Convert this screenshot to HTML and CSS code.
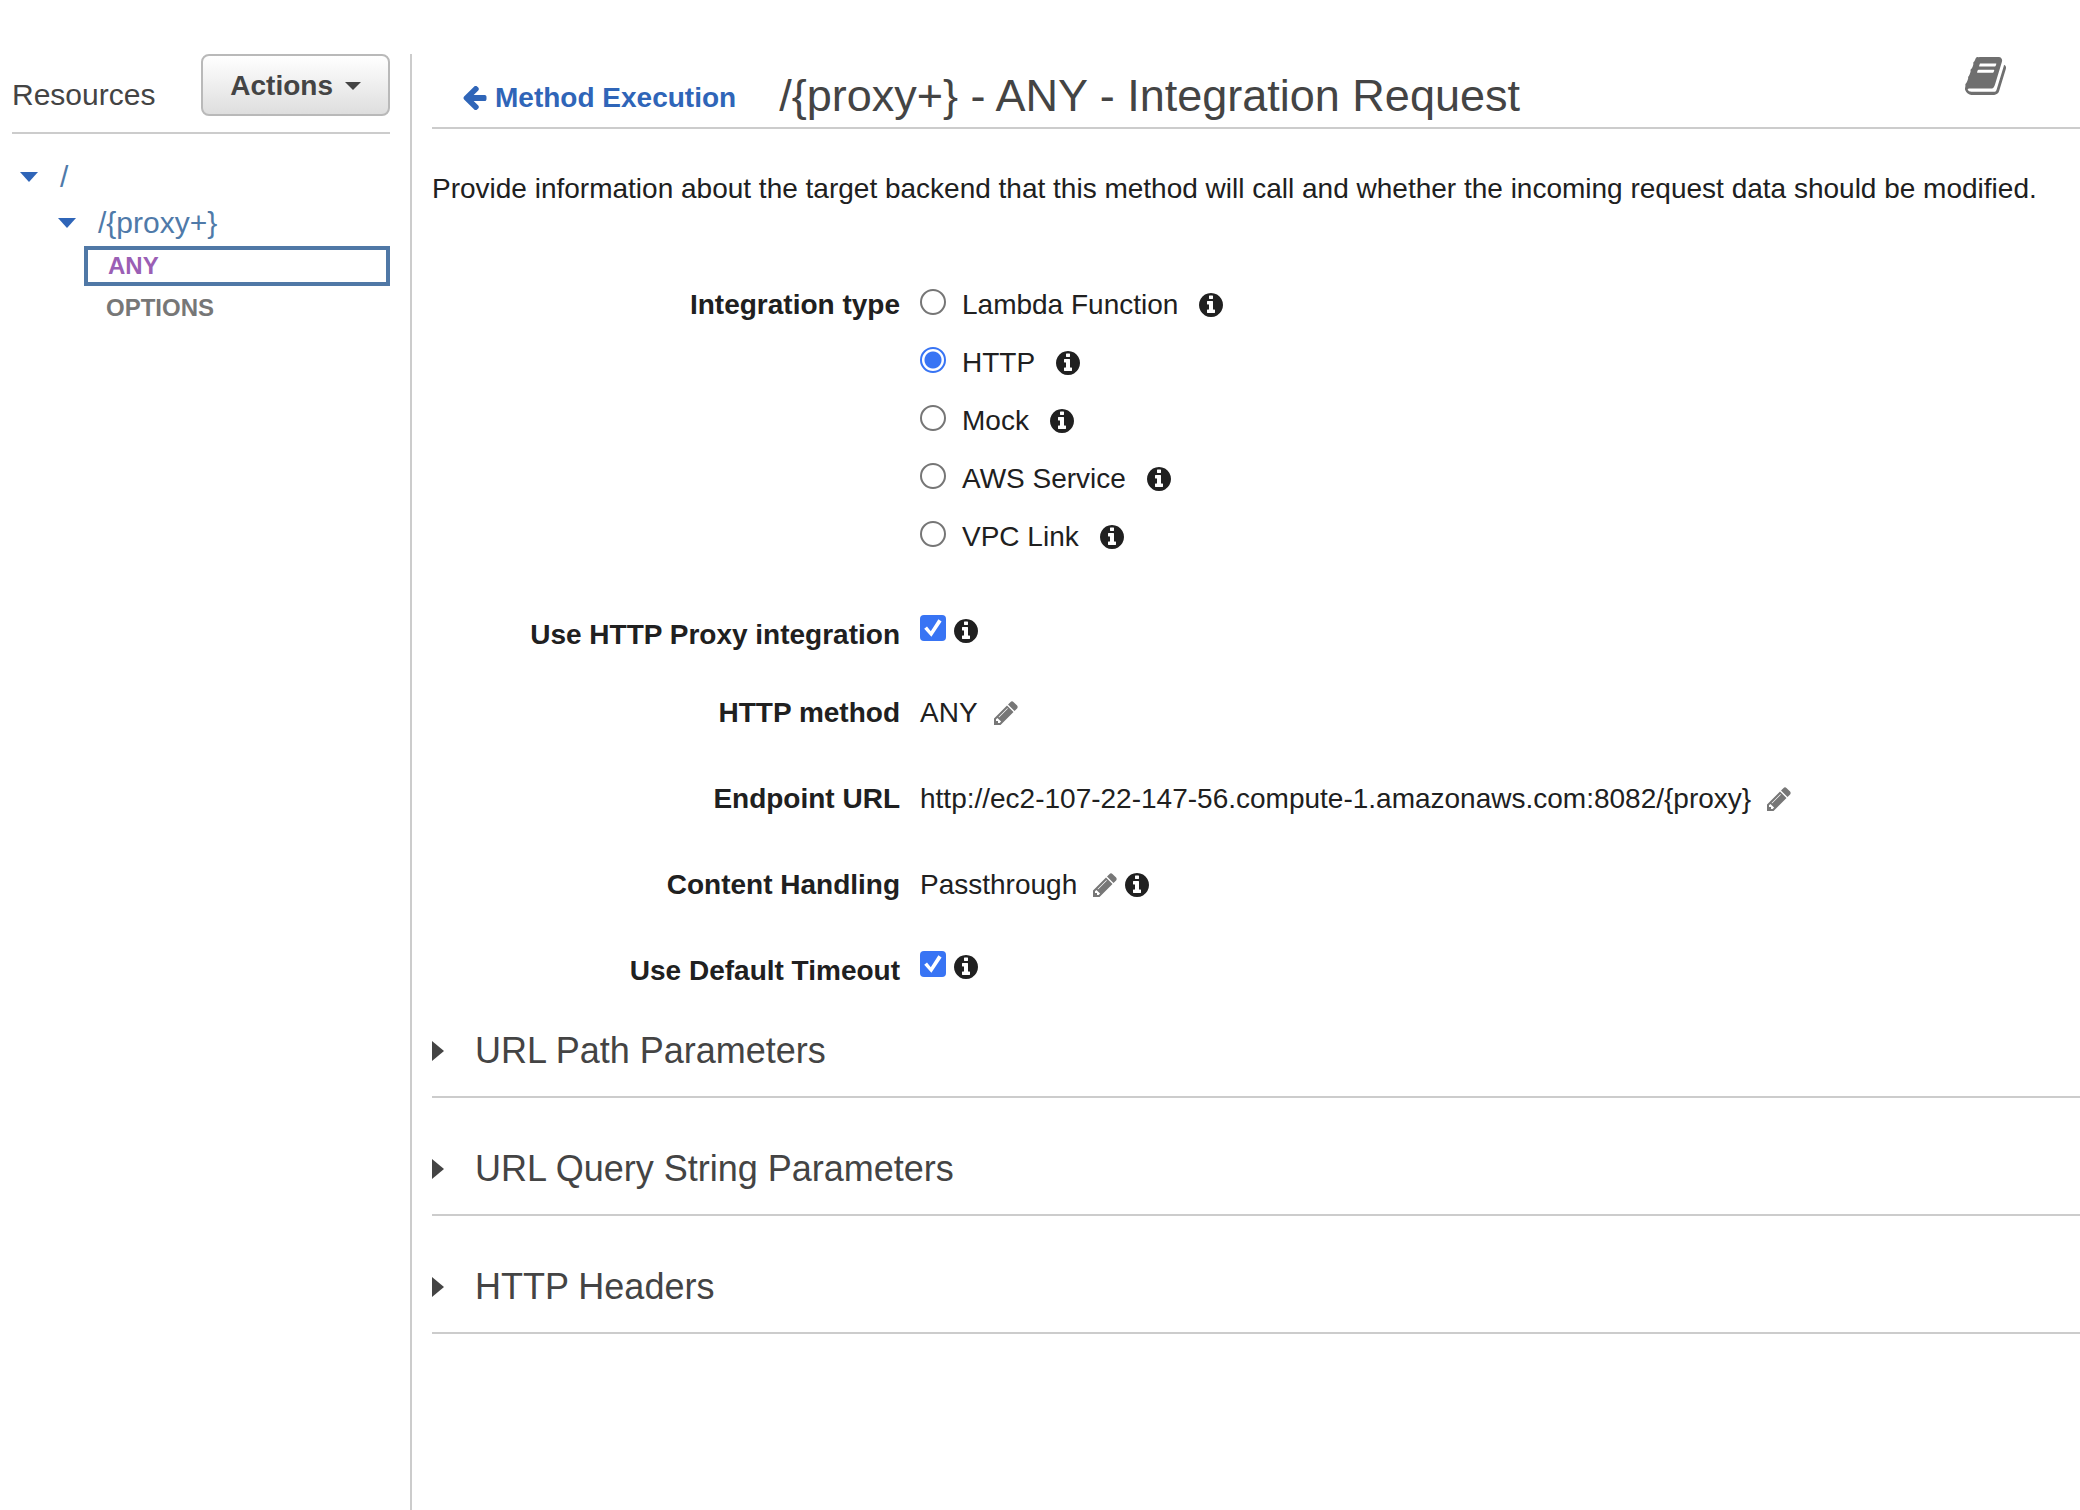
FILE: index.html
```html
<!DOCTYPE html>
<html lang="en">
<head>
<meta charset="utf-8">
<title>Integration Request</title>
<link rel="stylesheet" href="styles.css">
</head>
<body>
<svg class="sprite" aria-hidden="true">
  <symbol id="info" viewBox="0 128 1536 1536"><path d="M1024 1376v-160q0-14-9-23t-23-9h-96v-512q0-14-9-23t-23-9h-320q-14 0-23 9t-9 23v160q0 14 9 23t23 9h96v320h-96q-14 0-23 9t-9 23v160q0 14 9 23t23 9h448q14 0 23-9t9-23zm-128-896v-160q0-14-9-23t-23-9h-192q-14 0-23 9t-9 23v160q0 14 9 23t23 9h192q14 0 23-9t9-23zm640 416q0 209-103 385.5t-279.5 279.5-385.5 103-385.5-103-279.5-279.5-103-385.5 103-385.5 279.5-279.5 385.5-103 385.5 103 279.5 279.5 103 385.5z"/></symbol>
  <symbol id="pencil" viewBox="0 128 1536 1536"><path d="M363 1536l91-91-235-235-91 91v107h128v128h107zm523-928q0-22-22-22-10 0-17 7l-542 542q-7 7-7 17 0 22 22 22 10 0 17-7l542-542q7-7 7-17zm-54-192l416 416-832 832h-416v-416zm683 96q0 53-37 90l-166 166-416-416 166-165q36-38 90-38 53 0 91 38l235 234q37 39 37 91z"/></symbol>
  <symbol id="book" viewBox="0 128 1664 1536"><path d="M1639 478q40 57 18 129l-275 906q-19 64-76.5 107.5t-122.5 43.5h-923q-77 0-148.5-53.5t-99.5-131.5q-24-67-2-127 0-4 3-27t4-37q1-8-3-21.5t-3-19.5q2-11 8-21t16.5-23.5 16.5-23.5q23-38 45-91.5t30-91.5q3-10 .5-30t-.5-28q3-11 17-28t17-23q21-36 42-92t25-90q1-9-2.5-32t.5-28q4-13 22-30.5t22-22.5q19-26 42.5-84.5t27.5-96.5q1-8-3-25.5t-2-26.5q2-8 9-18t18-23 17-21q8-12 16.5-30.5t15-35 16-36 19.5-32 26.5-23.5 36-11.5 47.5 5.5l-1 3q38-9 51-9h761q74 0 114 56t18 130l-274 906q-36 119-71.5 153.5t-128.5 34.5h-869q-27 0-38 15-11 16-1 43 24 70 144 70h923q29 0 56-15.5t35-41.5l300-987q7-22 5-57 38 15 59 43zm-1064 2q-4 13 2 22.5t20 9.5h608q13 0 25.5-9.5t16.5-22.5l21-64q4-13-2-22.5t-20-9.5h-608q-13 0-25.5 9.5t-16.5 22.5zm-83 256q-4 13 2 22.5t20 9.5h608q13 0 25.5-9.5t16.5-22.5l21-64q4-13-2-22.5t-20-9.5h-608q-13 0-25.5 9.5t-16.5 22.5z"/></symbol>
  <symbol id="arrow" viewBox="64 192 1472 1536"><path d="M1536 896v128q0 53-32.5 90.5t-84.5 37.5h-704l293 294q38 36 38 90t-38 90l-75 76q-37 37-90 37-52 0-91-37l-651-652q-37-37-37-90 0-52 37-91l651-650q38-38 91-38 52 0 90 38l75 74q38 38 38 91t-38 91l-293 293h704q52 0 84.5 37.5t32.5 90.5z"/></symbol>
</svg>
<div class="layout">
  <nav class="sidebar" aria-label="Resources">
    <div class="sidebar-head">
      <h2 class="sidebar-title">Resources</h2>
      <button class="actions" type="button">Actions <span class="caret"></span></button>
    </div>
    <ul class="tree">
      <li>
        <a class="node" href="#root"><span class="caret caret-tree"></span>/</a>
        <ul class="tree-children">
          <li>
            <a class="node" href="#proxy"><span class="caret caret-tree"></span>/{proxy+}</a>
            <ul class="methods">
              <li><a class="method method-selected" href="#any">ANY</a></li>
              <li><a class="method" href="#options">OPTIONS</a></li>
            </ul>
          </li>
        </ul>
      </li>
    </ul>
  </nav>
  <main class="main">
    <header class="header">
      <a class="back" href="#method"><svg class="icon"><use href="#arrow"/></svg>Method Execution</a>
      <h1 class="title">/{proxy+} - ANY - Integration Request</h1>
      <a class="docs" href="#docs" aria-label="Documentation"><svg class="book"><use href="#book"/></svg></a>
    </header>
    <p class="description">Provide information about the target backend that this method will call and whether the incoming request data should be modified.</p>
    <form class="form">
      <div class="row types" role="radiogroup" aria-labelledby="type-label">
        <span class="label" id="type-label">Integration type</span>
        <div>
          <div class="value"><label class="choice"><input class="radio" type="radio" name="type">Lambda Function</label><svg class="icon"><use href="#info"/></svg></div>
          <div class="value"><label class="choice"><input class="radio" type="radio" name="type" checked>HTTP</label><svg class="icon"><use href="#info"/></svg></div>
          <div class="value"><label class="choice"><input class="radio" type="radio" name="type">Mock</label><svg class="icon"><use href="#info"/></svg></div>
          <div class="value"><label class="choice"><input class="radio" type="radio" name="type">AWS Service</label><svg class="icon"><use href="#info"/></svg></div>
          <div class="value"><label class="choice"><input class="radio" type="radio" name="type">VPC Link</label><svg class="icon"><use href="#info"/></svg></div>
        </div>
      </div>
      <div class="row proxy">
        <label class="label" for="use-proxy">Use HTTP Proxy integration</label>
        <div class="value check-value"><input class="check" id="use-proxy" type="checkbox" checked><svg class="icon"><use href="#info"/></svg></div>
      </div>
      <div class="row setting">
        <span class="label">HTTP method</span>
        <div class="value">ANY<button class="edit" type="button" aria-label="Edit HTTP method"><svg class="icon"><use href="#pencil"/></svg></button></div>
      </div>
      <div class="row setting">
        <span class="label">Endpoint URL</span>
        <div class="value">http://ec2-107-22-147-56.compute-1.amazonaws.com:8082/{proxy}<button class="edit" type="button" aria-label="Edit endpoint URL"><svg class="icon"><use href="#pencil"/></svg></button></div>
      </div>
      <div class="row setting">
        <span class="label">Content Handling</span>
        <div class="value">Passthrough<button class="edit" type="button" aria-label="Edit content handling"><svg class="icon"><use href="#pencil"/></svg></button><svg class="icon"><use href="#info"/></svg></div>
      </div>
      <div class="row">
        <label class="label" for="use-timeout">Use Default Timeout</label>
        <div class="value check-value"><input class="check" id="use-timeout" type="checkbox" checked><svg class="icon"><use href="#info"/></svg></div>
      </div>
    </form>
    <div class="sections">
      <h2 class="section"><button class="toggle" type="button" aria-expanded="false">URL Path Parameters</button></h2>
      <h2 class="section"><button class="toggle" type="button" aria-expanded="false">URL Query String Parameters</button></h2>
      <h2 class="section"><button class="toggle" type="button" aria-expanded="false">HTTP Headers</button></h2>
    </div>
  </main>
</div>
</body>
</html>
```
FILE: styles.css
```css
* { box-sizing: border-box; }

body {
  margin: 0;
  background: #fff;
  color: #202020;
  font-family: "Liberation Sans", Arial, sans-serif;
  font-size: 28px;
}

h1, h2, p, ul { margin: 0; padding: 0; font-weight: normal; }
ul { list-style: none; }
a { text-decoration: none; }
button { font-family: inherit; cursor: pointer; }

.sprite { display: none; }
.icon { flex: none; width: 24px; height: 24px; fill: currentColor; }

.layout { display: flex; min-height: 100vh; padding-top: 54px; }

/* Resource tree */
.sidebar { flex: none; width: 410px; padding: 0 20px 0 12px; }
.sidebar-head {
  display: flex;
  justify-content: space-between;
  align-items: flex-start;
  padding-bottom: 16px;
  border-bottom: 2px solid #ccc;
}
.sidebar-title { padding-top: 24px; font-size: 30px; line-height: 34px; color: #444; }
.actions {
  display: flex;
  align-items: center;
  gap: 12px;
  height: 62px;
  padding: 2px 27px 0;
  border: 2px solid #b9b9b9;
  border-radius: 8px;
  background: linear-gradient(#fff, #dedede);
  color: #444;
  font-size: 28px;
  font-weight: bold;
}
.caret {
  border: 8px solid transparent;
  border-top-color: currentColor;
  border-bottom: 0;
}
.caret-tree { border-width: 10px 9px 0; color: #2f65b8; }

.tree { padding: 20px 0 0 8px; }
.tree-children { padding-left: 38px; }
.node {
  display: flex;
  align-items: center;
  gap: 22px;
  font-size: 30px;
  line-height: 46px;
  color: #4f7aa9;
}
.methods { padding-left: 26px; }
.method {
  display: block;
  padding-left: 22px;
  color: #777;
  font-size: 24px;
  font-weight: bold;
  line-height: 44px;
}
.method-selected {
  padding-left: 20px;
  border: 4px solid #5078a6;
  color: #9b5fb5;
  line-height: 32px;
}

/* Main column */
.main { flex: 1; min-width: 0; padding-left: 20px; border-left: 2px solid #ccc; }
.header {
  display: flex;
  align-items: center;
  padding: 3px 74px 6px 31px;
  border-bottom: 2px solid #ccc;
}
.back {
  display: flex;
  align-items: center;
  gap: 8px;
  padding-top: 18px;
  color: #2f65b8;
  font-weight: bold;
  line-height: 32px;
}
.title { padding: 14px 0 0 43px; color: #444; font-size: 45px; line-height: 50px; }
.docs { align-self: flex-start; margin-left: auto; color: #6f6f6f; }
.book { display: block; width: 41px; height: 38px; fill: currentColor; }
.description { padding-top: 40px; line-height: 40px; }

.form { padding-top: 67px; }
.row { display: grid; grid-template-columns: 468px 1fr; column-gap: 20px; line-height: 58px; }
.types { margin-bottom: 40px; }
.proxy { margin-bottom: 20px; }
.setting { margin-bottom: 28px; }
.label { font-weight: bold; text-align: right; }
.value { display: flex; align-items: center; height: 58px; }
.choice { display: flex; align-items: center; gap: 16px; margin-right: 21px; }
.check-value { gap: 8px; height: 50px; }

.radio, .check {
  flex: none;
  appearance: none;
  width: 26px;
  height: 26px;
  margin: 0 0 6px;
}
.radio { border: 2px solid #767676; border-radius: 50%; background: #fff; }
.radio:checked { border-color: #3874f4; background: radial-gradient(circle, #3874f4 8px, #fff 9px); }
.check {
  display: grid;
  place-items: center;
  border-radius: 4px;
  background: #3874f4;
}
.check::before {
  content: "";
  width: 20px;
  height: 20px;
  background: #fff;
  clip-path: polygon(6% 54%, 20% 43%, 39% 66%, 77% 6%, 93% 17%, 42% 94%);
}
.edit {
  display: flex;
  margin: 0 8px 0 16px;
  padding: 0;
  border: 0;
  background: none;
  color: #777;
}

/* Collapsed sections */
.sections { display: grid; gap: 49px; padding-top: 29px; }
.section { padding-bottom: 23px; border-bottom: 2px solid #ccc; }
.toggle {
  display: flex;
  align-items: center;
  gap: 31px;
  padding: 0;
  border: 0;
  background: none;
  color: #444;
  font-size: 36px;
  line-height: 44px;
}
.toggle::before {
  content: "";
  border: 10px solid transparent;
  border-left: 12px solid #444;
  border-right: 0;
}
```
